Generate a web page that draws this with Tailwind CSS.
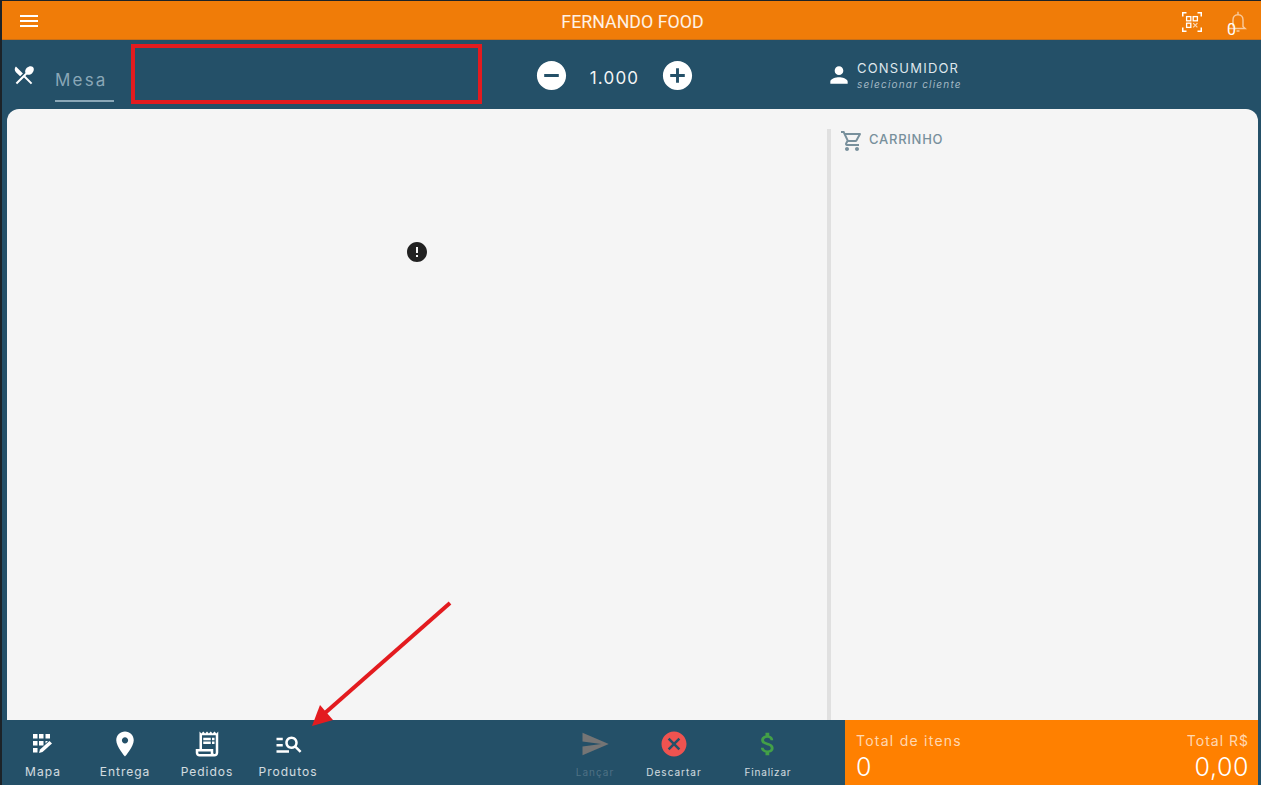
<!DOCTYPE html>
<html lang="pt-BR">
<head>
    <meta charset="UTF-8">
    <meta name="viewport" content="width=device-width, initial-scale=1.0">
    <title>Fernando Food</title>
    <script src="https://cdn.jsdelivr.net/npm/@tailwindcss/browser@4"></script>
</head>
<body class="overflow-hidden">
<div class="relative flex flex-col h-[785px] w-[1261px] bg-[#245068] border-t border-l-2 border-[#1c2328] font-['Inter',sans-serif] text-white">

    <!-- topo -->
    <header class="grid grid-cols-[1fr_auto_1fr] items-center h-[39px] shrink-0 bg-[#f07c08] border-b border-[#c96f17]">
        <div class="pl-[15px] mt-[2px]">
            <svg class="w-6 h-6 fill-white" viewBox="0 0 24 24"><path d="M3 18h18v-2H3v2zm0-5h18v-2H3v2zm0-7v2h18V6H3z"/></svg>
        </div>
        <h1 class="ml-[2px] mt-[4px] font-['Roboto',sans-serif] text-[17.8px] leading-[24px] text-white/90">FERNANDO FOOD</h1>
        <div class="flex items-center justify-end pr-[11px] gap-[24px]">
            <svg class="w-[20px] h-[20px] mt-[3px] fill-none stroke-white" viewBox="0 0 20 20" stroke-width="1.3">
                <path d="M.7 4.5V.7h3.8M15.5.7h3.8v3.8M19.3 15.5v3.8h-3.8M4.5 19.3H.7v-3.8" stroke-width="1.6"/>
                <rect x="4.6" y="4.6" width="4.2" height="4.2"/><rect x="11.2" y="4.6" width="4.2" height="4.2"/><rect x="4.6" y="11.2" width="4.2" height="4.2"/>
                <path d="M11.2 11.2l4.2 4.2M15.4 11.2l-4.2 4.2" stroke-width="1.2" stroke-opacity=".7"/>
            </svg>
            <div class="relative w-[24px] h-[24px] mt-[3px]">
                <svg class="w-[24px] h-[24px] fill-none stroke-white/60" viewBox="0 0 24 24" stroke-width="1.4"><path d="M7 16.5V10c0-3 1.9-5.2 5-5.4 3.1.2 5 2.4 5 5.4v6.500l2.200 2H3M12 4.600V1.800M10.500 21h3"/></svg>
                <span class="absolute left-[1px] top-[12px] font-['Roboto',sans-serif] text-[16px] leading-[16px]">0</span>
            </div>
        </div>
    </header>

    <!-- barra da mesa -->
    <div class="flex h-[69px] shrink-0">
        <svg class="w-6 h-6 ml-[10px] mt-[23px] fill-white" viewBox="0 0 24 24"><path d="M8.1 13.34l2.83-2.83L3.91 3.5c-1.56 1.56-1.56 4.09 0 5.66l4.19 4.18zm6.78-1.81c1.53.71 3.68.21 5.27-1.38 1.91-1.91 2.28-4.65.81-6.12-1.46-1.46-4.2-1.1-6.12.81-1.59 1.59-2.09 3.74-1.38 5.27L3.7 19.87l1.41 1.41L12 14.41l6.88 6.88 1.41-1.41L13.41 13l1.47-1.47z"/></svg>
        <div class="ml-[19px] mt-[27px] w-[59px] h-[35px] border-b-2 border-[#8aa7b7] text-[17px] leading-[26px] tracking-[2.2px] text-[#8aa7b7]">Mesa</div>
        <div class="flex items-center ml-[420px] h-[71px]">
            <svg class="w-[35px] h-[35px] fill-white" viewBox="0 0 24 24"><path d="M12 2C6.48 2 2 6.48 2 12s4.48 10 10 10 10-4.48 10-10S17.52 2 12 2zm5 11H7v-2h10v2z"/></svg>
            <span class="w-[91px] text-center text-[17px] tracking-[1.2px] mt-[7px] text-white/95">1.000</span>
            <svg class="w-[35px] h-[35px] fill-white" viewBox="0 0 24 24"><path d="M12 2C6.48 2 2 6.48 2 12s4.48 10 10 10 10-4.48 10-10S17.52 2 12 2zm5 11h-4v4h-2v-4H7v-2h4V7h2v4h4v2z"/></svg>
        </div>
        <div class="flex items-start ml-[131px] mt-[20px]">
            <svg class="w-[26px] h-[26px] mt-[2px] fill-white" viewBox="0 0 24 24"><path d="M12 12c2.21 0 4-1.79 4-4s-1.79-4-4-4-4 1.79-4 4 1.79 4 4 4zm0 2c-2.67 0-8 1.34-8 4v2h16v-2c0-2.66-5.33-4-8-4z"/></svg>
            <div class="ml-[5px]">
                <p class="text-[13px] leading-[16px] tracking-[1.2px] text-[#dfe7ec]">CONSUMIDOR</p>
                <p class="mt-[1px] text-[10px] leading-[14px] tracking-[1.2px] italic text-[#a3b8c4]">selecionar cliente</p>
            </div>
        </div>
    </div>

    <!-- conteudo -->
    <main class="flex flex-1 ml-[5px] mr-[3px] bg-[#f5f5f5] rounded-t-[12px]">
        <div class="w-[820px] flex justify-center items-start pt-[131px]">
            <svg class="w-6 h-6 fill-[#212121]" viewBox="0 0 24 24"><path d="M12 2C6.48 2 2 6.48 2 12s4.48 10 10 10 10-4.48 10-10S17.52 2 12 2zm1 15h-2v-2h2v2zm0-4h-2V7h2v6z"/></svg>
        </div>
        <aside class="flex-1 mt-[20px] border-l-4 border-[#e0e0e0] pl-[9px] flex items-start">
            <svg class="w-6 h-6 fill-[#78909c]" viewBox="0 0 24 24"><path d="M15.55 13c.75 0 1.41-.41 1.75-1.03l3.58-6.49c.37-.66-.11-1.48-.87-1.48H5.21l-.94-2H1v2h2l3.6 7.59-1.35 2.44C4.52 15.37 5.48 17 7 17h12v-2H7l1.1-2h7.45zM6.16 6h12.15l-2.76 5H8.53L6.16 6zM7 18c-1.1 0-1.99.9-1.99 2S5.9 22 7 22s2-.9 2-2-.9-2-2-2zm10 0c-1.1 0-1.99.9-1.99 2s.89 2 1.99 2 2-.9 2-2-.9-2-2-2z"/></svg>
            <span class="ml-[5px] text-[13px] leading-[20px] tracking-[0.75px] font-medium text-[#78909c]">CARRINHO</span>
        </aside>
    </main>

    <!-- rodape -->
    <footer class="flex h-[65px] shrink-0 pr-[3px]">
        <div class="flex flex-col items-center w-[82px] pt-[9px]">
            <svg class="w-[30px] h-[30px] fill-white" viewBox="0 0 30 30"><path d="M5 5h4.5v4.5H5zM11 5h4.5v4.5H11zM17.5 5H22v4.5h-4.5zM5 12h4.5v4.5H5zM11 12h4.5v4.5H11zM17.5 12H20l-2.5 2.5zM5 19h4.5v4.5H5z"/><path d="M11 24l1-3.5L21.5 12l2.5 2.5-9.5 8.5z"/></svg>
            <span class="mt-[5px] text-[12px] leading-[16px] tracking-[1px] text-white/80">Mapa</span>
        </div>
        <div class="flex flex-col items-center w-[82px] pt-[9px]">
            <svg class="w-[30px] h-[30px] fill-white" viewBox="0 0 24 24"><path d="M12 2C8.13 2 5 5.13 5 9c0 5.25 7 13 7 13s7-7.75 7-13c0-3.87-3.13-7-7-7zm0 9.5c-1.38 0-2.5-1.12-2.5-2.5s1.12-2.5 2.5-2.5 2.5 1.12 2.5 2.5-1.12 2.5-2.5 2.5z"/></svg>
            <span class="mt-[5px] text-[12px] leading-[16px] tracking-[1px] text-white/80">Entrega</span>
        </div>
        <div class="flex flex-col items-center w-[82px] pt-[9px]">
            <svg class="w-[30px] h-[30px] fill-white" viewBox="0 0 24 24"><path d="M19.5 3.5 18 2l-1.5 1.5L15 2l-1.5 1.5L12 2l-1.5 1.5L9 2 7.5 3.5 6 2v14H3v3c0 1.66 1.34 3 3 3h12c1.66 0 3-1.34 3-3V2l-1.5 1.5zM15 20H6c-.55 0-1-.45-1-1v-1h10v2zm4-1c0 .55-.45 1-1 1s-1-.45-1-1v-3H8V5h11v14z"/><path d="M9 7h6v2H9zM16 7h2v2h-2zM9 10h6v2H9zM16 10h2v2h-2z"/></svg>
            <span class="mt-[5px] text-[12px] leading-[16px] tracking-[1px] text-white/80">Pedidos</span>
        </div>
        <div class="flex flex-col items-center w-[82px] pt-[9px]">
            <svg class="w-[30px] h-[30px] fill-white" viewBox="0 0 24 24"><path d="M7 9H2V7h5v2zm0 3H2v2h5v-2zm13.59 7l-3.83-3.83c-.8.52-1.74.83-2.76.83-2.76 0-5-2.24-5-5s2.24-5 5-5 5 2.24 5 5c0 1.02-.31 1.96-.83 2.75L22 17.59 20.59 19zM17 11c0-1.65-1.35-3-3-3s-3 1.35-3 3 1.35 3 3 3 3-1.35 3-3zM2 19h10v-2H2v2z"/></svg>
            <span class="mt-[5px] -ml-[2px] text-[12px] leading-[16px] tracking-[1px] text-white/80">Produtos</span>
        </div>
        <div class="flex flex-col items-center w-[80px] ml-[225px] pt-[9px]">
            <svg class="w-[30px] h-[30px] fill-[#757575]" viewBox="0 0 24 24"><path d="M2.01 21L23 12 2.01 3 2 10l15 2-15 2z"/></svg>
            <span class="mt-[5px] text-[10px] leading-[16px] tracking-[1px] text-white/20">Lançar</span>
        </div>
        <div class="flex flex-col items-center w-[78px] pt-[9px]">
            <svg class="w-[30px] h-[30px] fill-[#ef5350]" viewBox="0 0 24 24"><path d="M12 2C6.47 2 2 6.47 2 12s4.47 10 10 10 10-4.47 10-10S17.53 2 12 2zm5 13.59L15.59 17 12 13.41 8.41 17 7 15.59 10.59 12 7 8.41 8.41 7 12 10.59 15.59 7 17 8.41 13.41 12 17 15.59z"/></svg>
            <span class="mt-[5px] text-[10px] leading-[16px] tracking-[1px] text-white/80">Descartar</span>
        </div>
        <div class="flex flex-col items-center w-[110px] pt-[9px]">
            <svg class="w-[30px] h-[30px] fill-[#43a047]" viewBox="0 0 24 24"><path d="M11.8 10.9c-2.27-.59-3-1.2-3-2.15 0-1.09 1.01-1.85 2.7-1.85 1.78 0 2.44.85 2.5 2.1h2.21c-.07-1.72-1.12-3.3-3.21-3.81V3h-3v2.16c-1.94.42-3.5 1.68-3.5 3.61 0 2.31 1.91 3.46 4.7 4.13 2.5.6 3 1.48 3 2.41 0 .69-.49 1.79-2.7 1.79-2.06 0-2.87-.92-2.98-2.1h-2.2c.12 2.19 1.76 3.42 3.68 3.83V21h3v-2.15c1.95-.37 3.5-1.5 3.5-3.55 0-2.84-2.43-3.81-4.7-4.4z"/></svg>
            <span class="mt-[5px] text-[10px] leading-[16px] tracking-[0.8px] text-white/80">Finalizar</span>
        </div>
        <div class="flex justify-between w-[413px] ml-auto bg-[#ff8000] pl-[11px] pr-[9px] pt-[13px]">
            <div>
                <p class="text-[14px] leading-[16px] tracking-[1.25px] text-white/70">Total de itens</p>
                <p class="mt-[3px] text-[25px] leading-[30px] font-light">0</p>
            </div>
            <div class="text-right">
                <p class="text-[14px] leading-[16px] tracking-[1px] text-white/70">Total R$</p>
                <p class="mt-[3px] text-[25px] leading-[30px] tracking-[0.6px] font-light">0,00</p>
            </div>
        </div>
    </footer>

    <!-- marcacoes por cima da tela -->
    <div class="absolute left-[129px] top-[43px] w-[351px] h-[60px] border-4 border-[#e31b1f]"></div>
    <svg class="absolute -left-[2px] -top-[1px] pointer-events-none" width="1261" height="785" viewBox="0 0 1261 785">
        <path d="M450 603L325 713" stroke="#e31b1f" stroke-width="4" fill="none"/>
        <path d="M312 726L320 705L333 720z" fill="#e31b1f"/>
    </svg>
</div>
</body>
</html>
